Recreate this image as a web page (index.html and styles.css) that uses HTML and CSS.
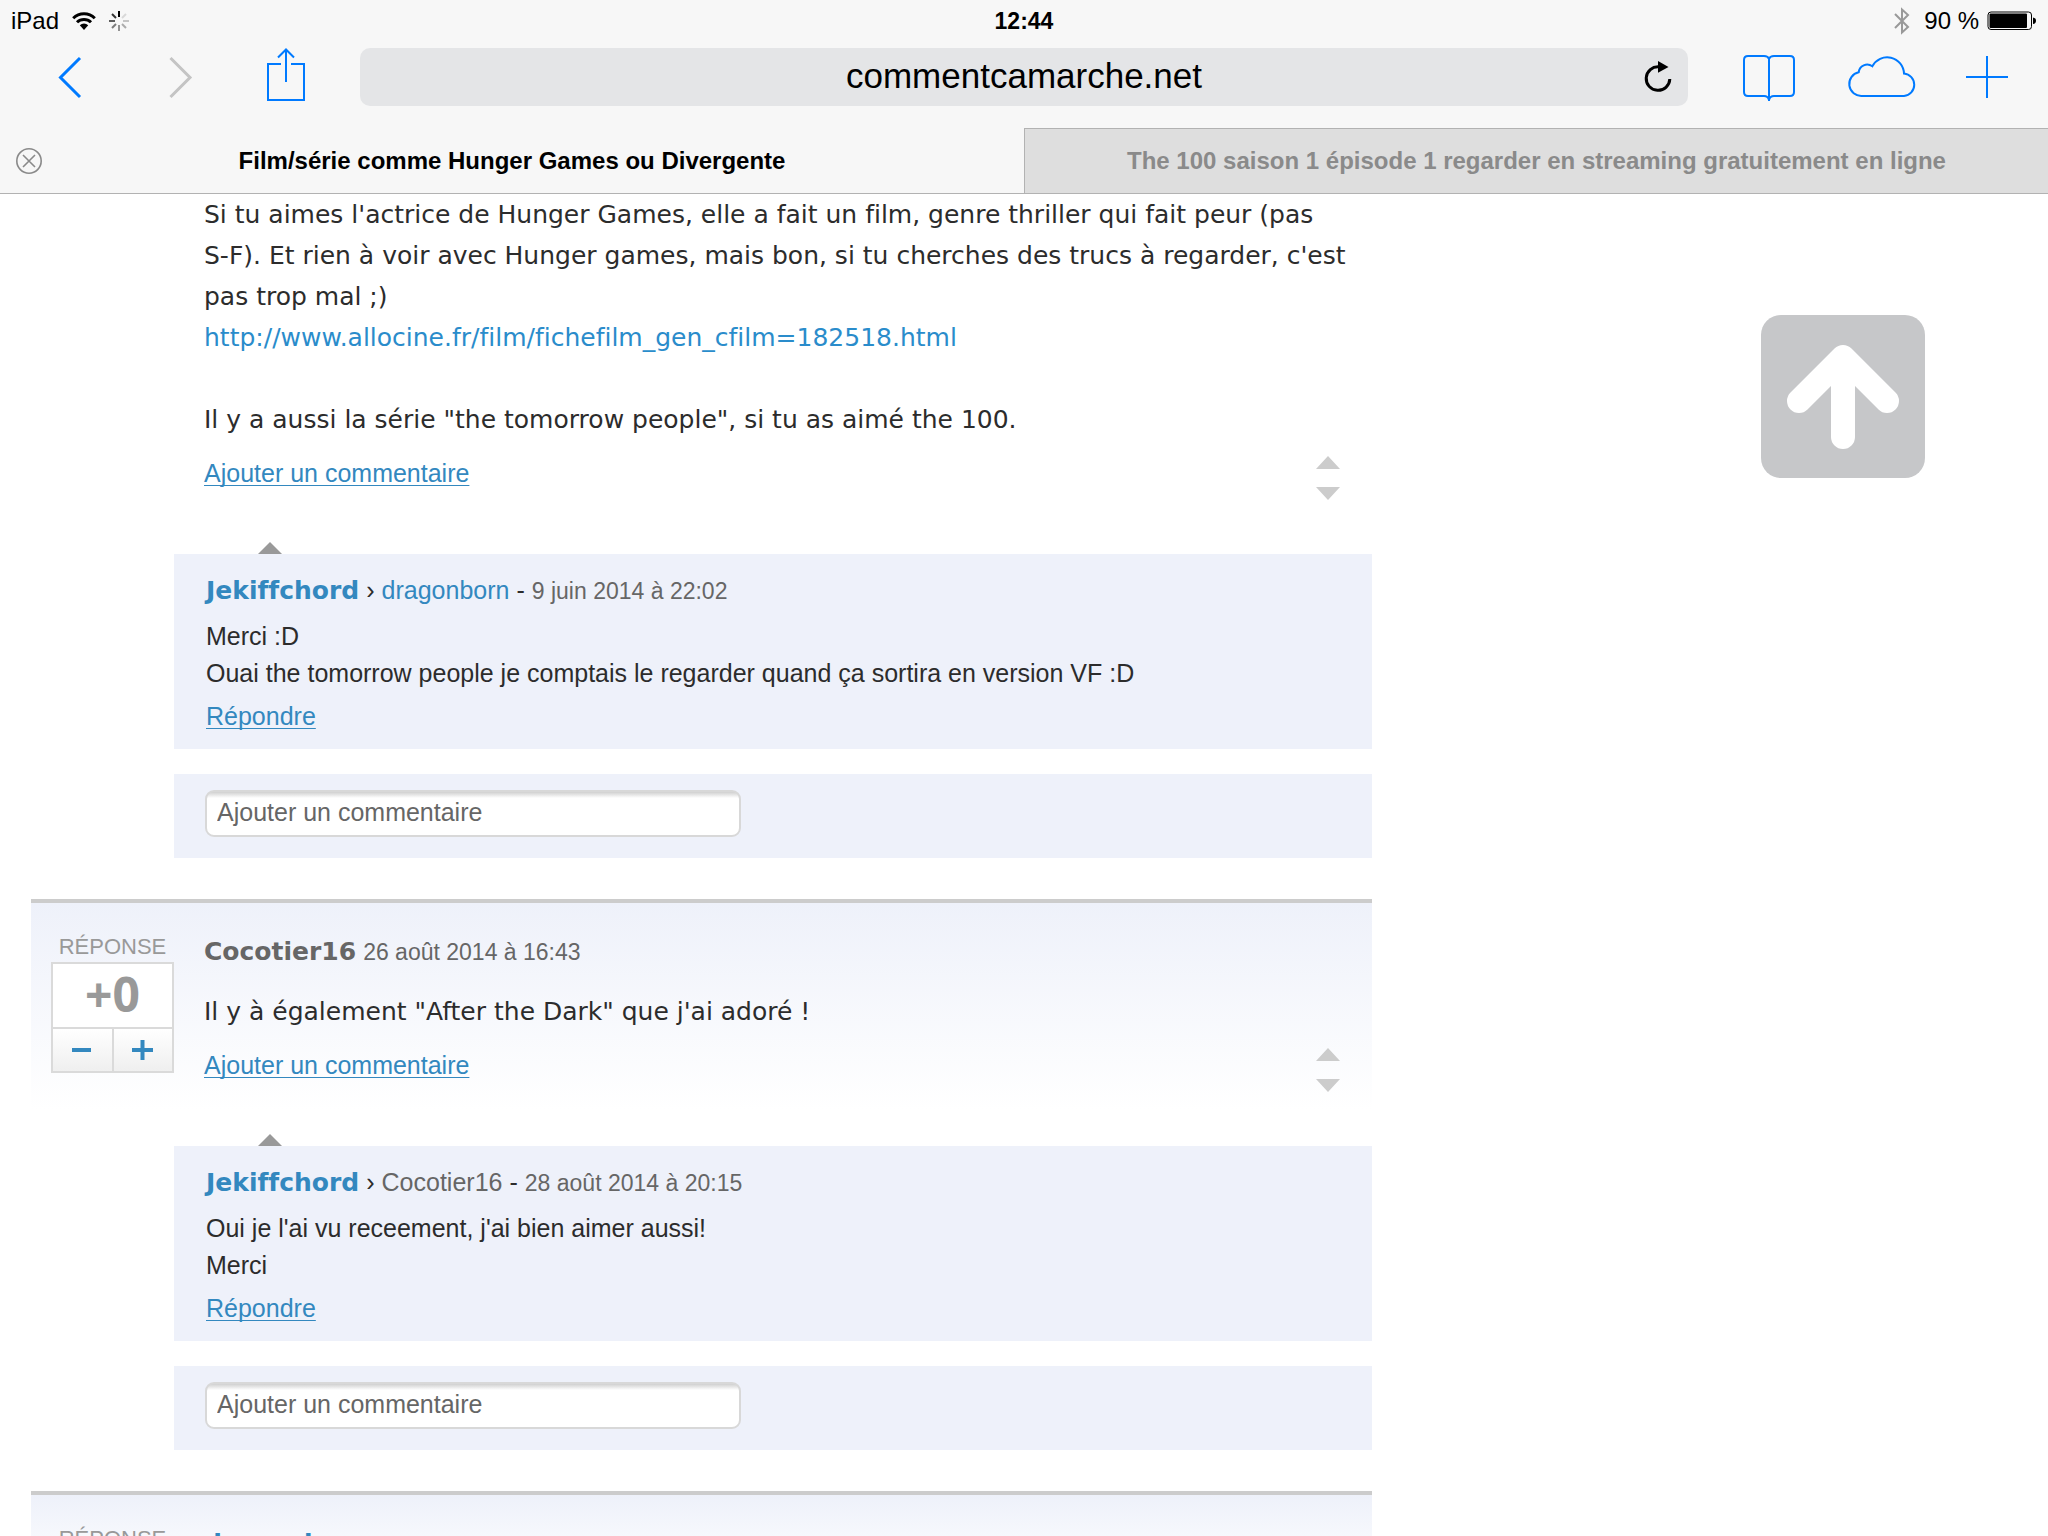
FILE: index.html
```html
<!DOCTYPE html>
<html lang="fr">
<head>
<meta charset="utf-8">
<title>Film/série comme Hunger Games ou Divergente</title>
<link rel="stylesheet" href="styles.css">
</head>
<body>
<header class="chrome">
  <div class="status">
    <div class="status-left">
      <span>iPad</span>
      <svg class="wifi" width="24" height="18" viewBox="0 0 24 18" aria-hidden="true">
        <g fill="none" stroke="#000" stroke-width="3"><path d="M1.2 6.2a15.400 15.400 0 0 1 21.600 0"/><path d="M5 10.300a10 10 0 0 1 14 0"/></g>
        <path d="M7.800 13.300a6 6 0 0 1 8.400 0L12 18z"/>
      </svg>
      <svg class="spinner" width="20" height="20" viewBox="-10 -10 20 20" aria-hidden="true">
        <g stroke="#000" stroke-width="2">
          <path d="M0-4V-10"/><path d="M3-3 7-7" opacity=".12"/><path d="M4 0H10" opacity=".2"/><path d="M3 3 7 7" opacity=".3"/>
          <path d="M0 4V10" opacity=".4"/><path d="M-3 3-7 7" opacity=".5"/><path d="M-4 0H-10" opacity=".62"/><path d="M-3-3-7-7" opacity=".8"/>
        </g>
      </svg>
    </div>
    <time class="clock">12:44</time>
    <div class="status-right">
      <svg width="16" height="28" viewBox="0 0 16 28" aria-hidden="true"><path d="M1 7 14 20 8 25.500V2.500L14 8 1 21" fill="none" stroke="#999" stroke-width="2"/></svg>
      <span class="percent">90 %</span>
      <svg width="50" height="20" viewBox="0 0 50 20" aria-hidden="true"><rect x="1" y="1" width="43.500" height="17.500" rx="3" fill="none" stroke="#000"/><rect x="2.500" y="2.500" width="37.500" height="14.500" rx="1"/><path d="M46 6.500q3 .5 3 3.300t-3 3.300z"/></svg>
    </div>
  </div>
  <div class="toolbar">
    <nav class="tools tools-left">
      <button class="tool" aria-label="Précédent"><svg width="90" height="58" viewBox="0 0 90 58"><path d="M56 10 36.500 29.500 56 49" stroke-width="3"/></svg></button>
      <button class="tool tool-off" aria-label="Suivant"><svg width="90" height="58" viewBox="0 0 90 58"><path d="M36.500 10 56 29.500 36.500 49" stroke-width="3"/></svg></button>
      <button class="tool" aria-label="Partager"><svg width="90" height="58" viewBox="0 0 90 58"><path d="M37 16H24V52H60V16H47M42 1.500V34M34 9.500 42 1.500 50 9.500"/></svg></button>
    </nav>
    <div class="address">
      <input class="url" type="text" value="commentcamarche.net" aria-label="Adresse">
      <button class="reload" aria-label="Recharger"><svg width="30" height="34" viewBox="0 0 30 34"><path d="M26.800 19A11.800 11.800 0 1 1 16 6.800" fill="none" stroke="#000" stroke-width="3"/><path d="M15 1 25.500 7 15 12.700z"/></svg></button>
    </div>
    <nav class="tools tools-right">
      <button class="tool" aria-label="Signets"><svg width="90" height="58" viewBox="0 0 90 58"><path d="M45 53V11Q44 8 40 8H24Q20 8 20 12V44Q20 48 24 48H40Q44 48 45 52Q46 48 50 48H66Q70 48 70 44V12Q70 8 66 8H50Q46 8 45 11"/></svg></button>
      <button class="tool" aria-label="Onglets iCloud"><svg width="90" height="58" viewBox="0 0 90 58"><path d="M26 48A12 12 0 0 1 22.700 24.300A8.500 8.500 0 0 1 36.300 18.300A16.800 16.800 0 0 1 68 25.500A11.300 11.300 0 0 1 68 48Z"/></svg></button>
      <button class="tool" aria-label="Nouvel onglet"><svg width="90" height="58" viewBox="0 0 90 58"><path d="M18 29H60M39 8V50"/></svg></button>
    </nav>
  </div>
  <div class="tabs">
    <div class="tab tab-active">
      <button class="tab-close" aria-label="Fermer l'onglet"><svg width="26" height="26" viewBox="0 0 26 26"><g fill="none" stroke="#8a8a8a" stroke-width="1.600"><circle cx="13" cy="13" r="12.200"/><path d="M7 7 19 19M19 7 7 19"/></g></svg></button>
      <a class="tab-title" href="#">Film/série comme Hunger Games ou Divergente</a>
    </div>
    <div class="tab tab-back"><a class="tab-title" href="#">The 100 saison 1 épisode 1 regarder en streaming gratuitement en ligne</a></div>
  </div>
</header>

<div class="page">
  <main class="thread">
    <article class="post post-first">
      <div class="post-body">
        <p class="message">Si tu aimes l'actrice de Hunger Games, elle a fait un film, genre thriller qui fait peur (pas<br>S-F). Et rien à voir avec Hunger games, mais bon, si tu cherches des trucs à regarder, c'est<br>pas trop mal ;)<br><a class="plain-link" href="#">http://www.allocine.fr/film/fichefilm_gen_cfilm=182518.html</a><br><br>Il y a aussi la série "the tomorrow people", si tu as aimé the 100.</p>
        <div class="actions">
          <a class="action" href="#">Ajouter un commentaire</a>
          <svg class="sorter" width="24" height="44" viewBox="0 0 24 44" aria-hidden="true"><path d="M12 0 24 13H0zM0 31H24L12 44z"/></svg>
        </div>
      </div>
    </article>
    <section class="replies">
      <article class="reply">
        <header class="byline"><a class="author" href="#">Jekiffchord</a><span>›</span><a class="target" href="#">dragonborn</a><span>-</span><time class="date">9 juin 2014 à 22:02</time></header>
        <p class="reply-text">Merci :D<br>Ouai the tomorrow people je comptais le regarder quand ça sortira en version VF :D</p>
        <a class="action" href="#">Répondre</a>
      </article>
      <form class="comment"><input class="comment-field" type="text" placeholder="Ajouter un commentaire" aria-label="Ajouter un commentaire"></form>
    </section>

    <article class="post post-answer">
      <aside class="votes">
        <span class="votes-label">RÉPONSE</span>
        <div class="vote-box">
          <strong class="score">+0</strong>
          <button class="vote" aria-label="Voter contre"><svg width="22" height="22" viewBox="0 0 22 22"><path d="M1 11H20"/></svg></button>
          <button class="vote" aria-label="Voter pour"><svg width="22" height="22" viewBox="0 0 22 22"><path d="M0 11H21M10.500 1V21"/></svg></button>
        </div>
      </aside>
      <div class="post-body">
        <header class="byline"><span class="author author-guest">Cocotier16</span><time class="date">26 août 2014 à 16:43</time></header>
        <p class="message">Il y à également "After the Dark" que j'ai adoré !</p>
        <div class="actions">
          <a class="action" href="#">Ajouter un commentaire</a>
          <svg class="sorter" width="24" height="44" viewBox="0 0 24 44" aria-hidden="true"><path d="M12 0 24 13H0zM0 31H24L12 44z"/></svg>
        </div>
      </div>
    </article>
    <section class="replies">
      <article class="reply">
        <header class="byline"><a class="author" href="#">Jekiffchord</a><span>›</span><span class="target target-guest">Cocotier16</span><span>-</span><time class="date">28 août 2014 à 20:15</time></header>
        <p class="reply-text">Oui je l'ai vu receement, j'ai bien aimer aussi!<br>Merci</p>
        <a class="action" href="#">Répondre</a>
      </article>
      <form class="comment"><input class="comment-field" type="text" placeholder="Ajouter un commentaire" aria-label="Ajouter un commentaire"></form>
    </section>

    <article class="post post-answer">
      <aside class="votes"><span class="votes-label">RÉPONSE</span></aside>
      <div class="post-body">
        <header class="byline"><a class="author" href="#">dragonborn</a></header>
      </div>
    </article>
  </main>
  <aside class="side">
    <button class="to-top" aria-label="Haut de page"><svg width="164" height="163" viewBox="0 0 164 163"><path d="M38 86 82 42 126 86M82 44V122" fill="none" stroke="#fff" stroke-width="24" stroke-linecap="round" stroke-linejoin="round"/></svg></button>
  </aside>
</div>
</body>
</html>
```
FILE: styles.css
```css
* { box-sizing: border-box; }

body {
  margin: 0;
  height: 100vh;
  display: flex;
  flex-direction: column;
  overflow: hidden;
  background: #fff;
  color: #2c2c2c;
  font-family: "Liberation Sans", Arial, sans-serif;
  font-size: 25px;
  font-variant-ligatures: none;
}

a { color: #3388bf; text-decoration: none; }
button { padding: 0; border: 0; background: none; }
svg { display: block; }
p { margin: 0; }

/* Browser chrome */
.chrome { flex: none; background: #f7f7f7; color: #000; }

.status {
  display: grid;
  grid-template-columns: 1fr auto 1fr;
  align-items: center;
  height: 40px;
  padding: 2px 11px 0;
  font-size: 24px;
}
.status-left, .status-right { display: flex; align-items: center; }
.status-right { justify-content: flex-end; }
.wifi { margin-left: 13px; }
.spinner { margin-left: 13px; }
.clock { font-size: 23px; font-weight: bold; }
.percent { margin: 0 8px 0 14px; }

.toolbar {
  display: grid;
  grid-template-columns: 360px 1fr 360px;
  height: 88px;
  padding-top: 8px;
}
.tools { display: flex; align-items: flex-start; }
.tools-left { gap: 20px; padding-left: 24px; }
.tools-right { gap: 22px; padding-left: 36px; }
.tool { color: #007aff; }
.tool-off { color: #c4c4c4; }
.tool svg { fill: none; stroke: currentColor; stroke-width: 2; }

.address { position: relative; height: 58px; }
.url {
  width: 100%;
  height: 58px;
  padding: 0 2px 2px;
  border: 0;
  border-radius: 10px;
  background: #e4e5e7;
  color: #000;
  font: 35px "Liberation Sans", Arial, sans-serif;
  text-align: center;
}
.reload { position: absolute; top: 12px; right: 15px; }

.tabs { display: grid; grid-template-columns: 1fr 1fr; height: 66px; }
.tab {
  position: relative;
  display: flex;
  align-items: center;
  justify-content: center;
  border-bottom: 1px solid #b2b2b2;
  font-size: 24px;
  font-weight: bold;
}
.tab-back { border-top: 1px solid #b2b2b2; border-left: 1px solid #b2b2b2; background: #dedede; }
.tab-title { color: #000; }
.tab-back .tab-title { color: #8a8a8a; }
.tab-close { position: absolute; left: 16px; top: 20px; }

/* Forum page */
.page {
  flex: 1;
  min-height: 0;
  display: flex;
  justify-content: space-between;
  overflow: hidden;
  padding-left: 31px;
}
.thread { flex: 0 1 1341px; }
.side { padding: 121px 123px 0 0; }
.to-top { display: block; border-radius: 20px; background: #c6c7c9; }

.post { display: flex; }
.post-first { padding-left: 143px; }
.post-answer {
  border-top: 4px solid #ccc;
  background: linear-gradient(#eef1fa, #fff);
  padding-bottom: 18px;
}
.post-body { flex: 1; padding-left: 30px; }
.post-answer .post-body { padding-top: 30px; }
.post-answer .message { margin-top: 20px; }
.message { font-family: "DejaVu Sans", Verdana, sans-serif; font-size: 25px; line-height: 41px; }
.plain-link { color: #2a8ccb; }

.actions { display: flex; justify-content: space-between; margin-top: 16px; padding-right: 32px; }
.action {
  display: inline-block;
  line-height: 34px;
  text-decoration: underline;
  text-decoration-thickness: 1px;
  text-underline-offset: 3px;
  text-decoration-skip-ink: none;
}
.sorter { fill: #ccc; }

.byline { display: flex; align-items: baseline; gap: 7px; line-height: 37px; }
.author { font-family: "DejaVu Sans", Verdana, sans-serif; font-weight: bold; }
.author-guest, .target-guest, .date { color: #666; }
.date { font-size: 23px; }

.votes { width: 143px; padding: 31px 0 0 20px; }
.votes-label {
  display: block;
  margin-bottom: 2px;
  color: #999;
  font-size: 22px;
  line-height: 26px;
  text-align: center;
}
.vote-box {
  display: grid;
  grid-template-columns: 1fr 1fr;
  gap: 2px;
  border: 2px solid #dadada;
  background: #dadada;
}
.score {
  grid-column: 1 / 3;
  height: 63px;
  background: #fff;
  color: #999;
  font: bold 48px/60px "Open Sans", sans-serif;
  text-align: center;
}
.vote {
  display: flex;
  align-items: center;
  justify-content: center;
  height: 42px;
  background: linear-gradient(#fff, #efefef);
}
.vote svg { stroke: #3388bf; stroke-width: 4; }

.replies { display: grid; gap: 25px; margin: 54px 0 41px 143px; }
.post-answer + .replies { margin-top: 36px; }
.reply { position: relative; padding: 18px 32px 16px; background: #eef1fa; }
.reply::before {
  content: "";
  position: absolute;
  left: 84px;
  top: -12px;
  border: solid transparent;
  border-width: 0 12px 12px;
  border-bottom-color: #999;
}
.reply-text { margin: 8px 0 7px; line-height: 37px; }

.comment { padding: 16px 31px 21px; background: #eef1fa; }
.comment-field {
  display: block;
  width: 100%;
  max-width: 536px;
  height: 47px;
  padding: 0 10px 2px;
  border: 2px solid #d8d8d8;
  border-radius: 9px;
  background: linear-gradient(#d0d0d0, #fff 6px);
  font: 25px "Liberation Sans", Arial, sans-serif;
}
.comment-field::placeholder { color: #666; opacity: 1; }
```
